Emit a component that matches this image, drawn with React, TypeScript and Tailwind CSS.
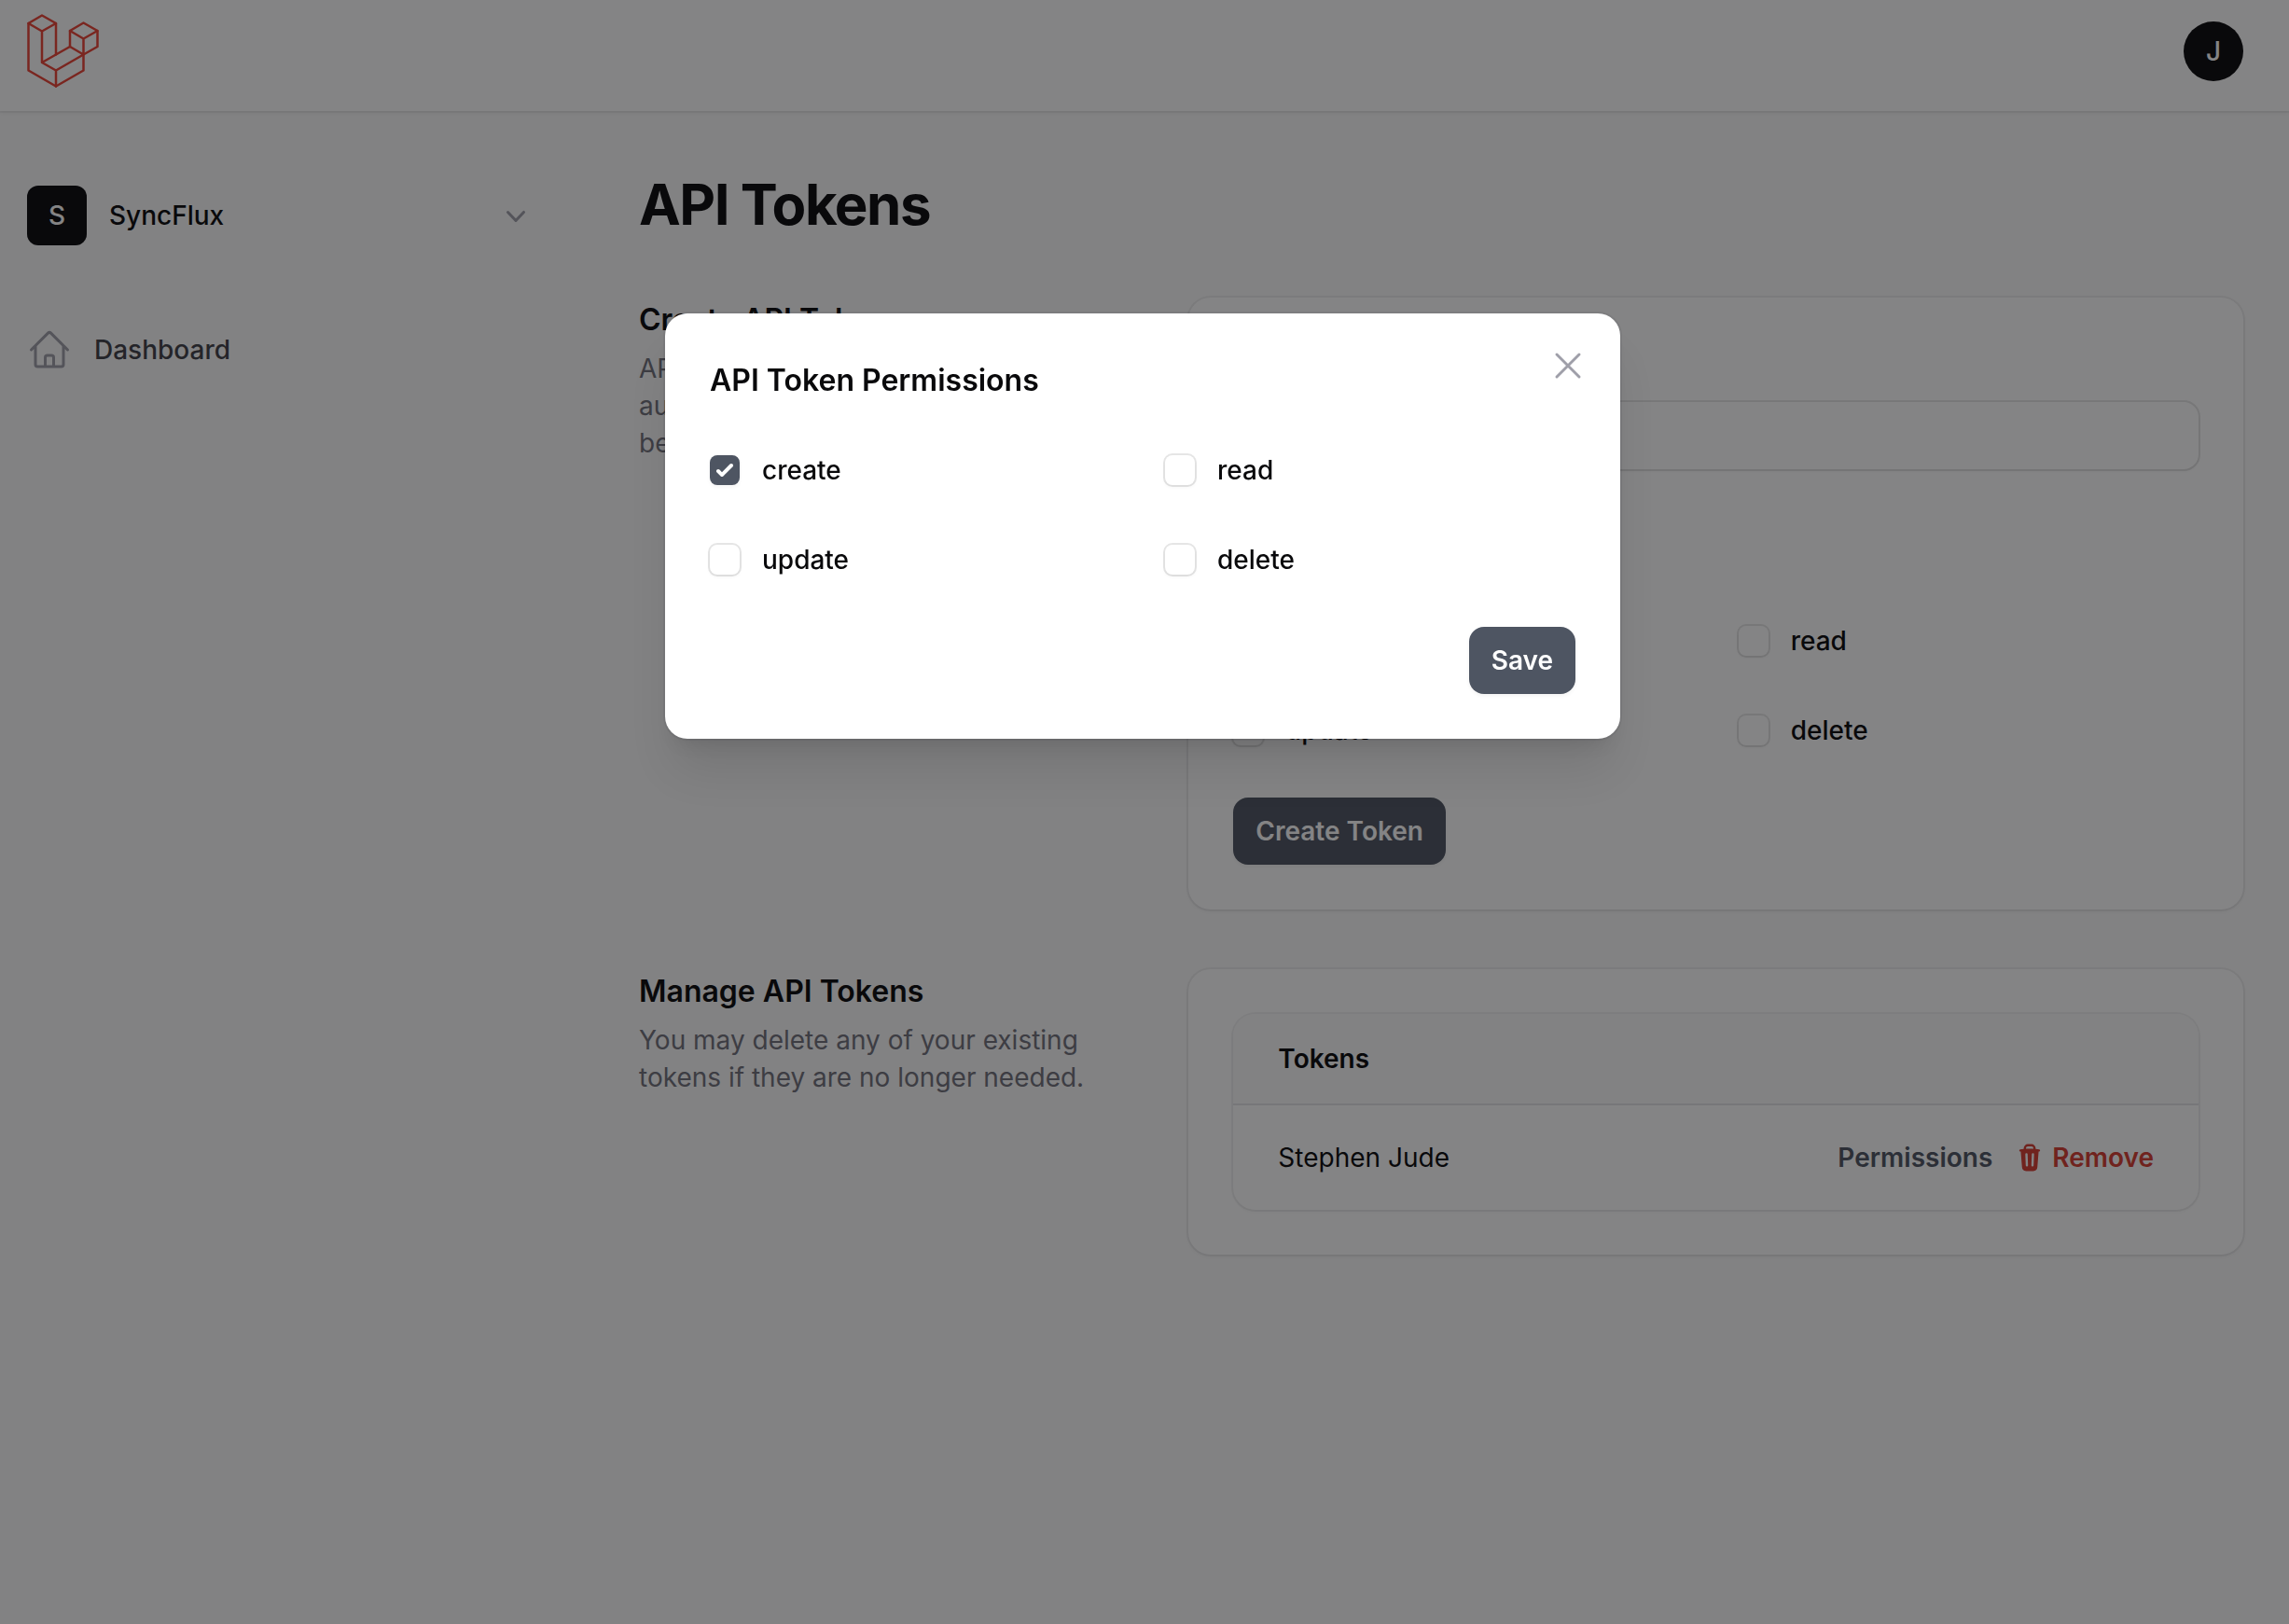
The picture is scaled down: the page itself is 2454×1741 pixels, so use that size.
import { useState } from "react";

const PERMISSIONS = ["create", "read", "update", "delete"];

function Logo() {
  return (
    <svg viewBox="0 0 79 80" className="h-20 w-[79px]" fill="none" stroke="#ea4335" strokeWidth="2.5" strokeLinejoin="round" strokeLinecap="round" aria-label="Laravel">
      <path d="M2.500 11 17 2.500 32 11V44.500L47 36V19L61.500 10.500 76.500 19V36L61.500 44.500V61.500L32 78.500 2.500 61.500Z" />
      <path d="M2.500 11 17 19.500 32 11M17 19.500V53L32 61.500V78.500M17 53 32 44.500M32 61.500 61.500 44.500 47 36M61.500 44.500V27.500M47 19 61.500 27.500 76.500 19" />
    </svg>
  );
}

function HomeIcon() {
  return (
    <svg viewBox="0 0 24 24" className="size-12 text-zinc-400" fill="none" stroke="currentColor" strokeWidth="1.5" strokeLinecap="round" strokeLinejoin="round" aria-hidden="true">
      <path d="m2.25 12 8.954-8.955a1.126 1.126 0 0 1 1.591 0L21.75 12M4.5 9.75v10.125c0 .621.504 1.125 1.125 1.125H9.75v-4.875c0-.621.504-1.125 1.125-1.125h2.25c.621 0 1.125.504 1.125 1.125V21h4.125c.621 0 1.125-.504 1.125-1.125V9.750M8.250 21h8.250" />
    </svg>
  );
}

function ChevronIcon() {
  return (
    <svg viewBox="0 0 20 20" className="size-10 text-zinc-400" fill="currentColor" aria-hidden="true">
      <path fillRule="evenodd" clipRule="evenodd" d="M5.230 7.710a.75.75 0 0 1 1.060.020L10 11.668l3.710-3.938a.75.75 0 1 1 1.080 1.040l-4.250 4.500a.75.75 0 0 1-1.080 0l-4.250-4.500a.75.75 0 0 1 .020-1.060Z" />
    </svg>
  );
}

function TrashIcon() {
  return (
    <svg viewBox="0 0 20 20" className="size-8" fill="currentColor" aria-hidden="true">
      <path fillRule="evenodd" clipRule="evenodd" d="M8.75 1A2.75 2.75 0 0 0 6 3.75v.443c-.795.077-1.584.176-2.365.298a.75.75 0 1 0 .230 1.482l.149-.022.841 10.518A2.75 2.75 0 0 0 7.596 19h4.807a2.75 2.75 0 0 0 2.742-2.530l.841-10.520.149.023a.75.75 0 0 0 .230-1.482A41.030 41.030 0 0 0 14 4.193V3.750A2.750 2.750 0 0 0 11.250 1h-2.500ZM10 4c.840 0 1.673.025 2.500.075V3.750c0-.690-.560-1.250-1.250-1.250h-2.500c-.690 0-1.250.560-1.250 1.250v.325C8.327 4.025 9.160 4 10 4ZM8.580 7.720a.75.75 0 0 0-1.500.060l.300 7.500a.75.75 0 1 0 1.500-.060l-.300-7.500Zm4.340.060a.75.75 0 1 0-1.500-.060l-.300 7.500a.75.75 0 1 0 1.500.060l.300-7.500Z" />
    </svg>
  );
}

function PermissionCheckbox({ label, initial = false }: { label: string; initial?: boolean }) {
  const [checked, setChecked] = useState(initial);
  return (
    <label className="flex h-12 items-center gap-6 text-[28px] leading-12 font-medium text-zinc-950">
      <span className="relative grid size-8">
        <input
          type="checkbox"
          checked={checked}
          onChange={(e) => setChecked(e.target.checked)}
          className="size-8 appearance-none rounded-lg bg-white shadow-[0_0_0_2px_rgba(9,9,11,0.1),0_2px_4px_rgba(0,0,0,0.05)] checked:bg-[#4e5562] checked:shadow-[0_2px_4px_rgba(0,0,0,0.05)]"
        />
        {checked && (
          <svg viewBox="0 0 16 16" className="pointer-events-none absolute inset-0 size-8" fill="white" aria-hidden="true">
            <path d="M12.207 4.793a1 1 0 0 1 0 1.414l-5 5a1 1 0 0 1-1.414 0l-2-2a1 1 0 0 1 1.414-1.414L6.500 9.086l4.293-4.293a1 1 0 0 1 1.414 0Z" />
          </svg>
        )}
      </span>
      {label}
    </label>
  );
}

function PermissionGrid({ selected = [] }: { selected?: string[] }) {
  return (
    <div className="grid grid-cols-2 gap-12">
      {PERMISSIONS.map((p) => (
        <PermissionCheckbox key={p} label={p} initial={selected.includes(p)} />
      ))}
    </div>
  );
}

const buttonClass =
  "h-18 rounded-2xl bg-[#4e5562] px-6 text-[28px] leading-10 font-semibold text-white shadow-[0_2px_4px_rgba(0,0,0,0.05)]";
const cardClass =
  "col-span-2 rounded-3xl bg-white p-12 shadow-[0_0_0_2px_rgba(9,9,11,0.05),0_2px_4px_rgba(0,0,0,0.05)]";

function SectionIntro({ title, text }: { title: string; text: string }) {
  return (
    <div className="flex flex-col gap-2">
      <h2 className="text-[32px] leading-12 font-semibold text-zinc-950">{title}</h2>
      <p className="text-[28px] leading-10 text-zinc-500">{text}</p>
    </div>
  );
}

export default function App() {
  return (
    <div className="min-h-screen bg-zinc-50 font-['Inter',sans-serif] text-zinc-950 antialiased">
      <header className="flex h-[119px] items-start justify-between bg-white pr-[49px] pl-7 shadow-[0_0_0_2px_rgba(9,9,11,0.05),0_2px_4px_rgba(0,0,0,0.05)]">
        <a href="#" className="pt-3.5">
          <Logo />
        </a>
        <button className="mt-[23px] size-16 rounded-full bg-zinc-950 text-[28px] font-medium text-white" aria-label="User menu">
          J
        </button>
      </header>

      <div className="flex">
        <aside className="flex w-[621px] shrink-0 flex-col gap-22 pt-20 pr-12 pl-[29px]">
          <button className="flex items-center gap-6 text-left text-[28px] font-medium">
            <span className="grid size-16 place-items-center rounded-xl bg-zinc-950 text-white">S</span>
            <span className="flex-1">SyncFlux</span>
            <ChevronIcon />
          </button>
          <nav>
            <a href="#" className="flex items-center gap-6 text-[28px] leading-12 font-medium text-zinc-700">
              <HomeIcon />
              Dashboard
            </a>
          </nav>
        </aside>

        <main className="flex flex-1 flex-col gap-16 py-16 pr-[49px] pl-16">
          <h1 className="text-[60px] leading-18 font-bold tracking-tight">API Tokens</h1>

          <section className="grid grid-cols-3 items-start gap-12">
            <SectionIntro
              title="Create API Token"
              text="API tokens allow third-party services to authenticate with our application on your behalf."
            />
            <form className={cardClass} onSubmit={(e) => e.preventDefault()}>
              <div className="flex flex-col gap-12">
                <label className="flex flex-col gap-4 text-[28px] leading-12 font-medium">
                  Token Name
                  <input
                    type="text"
                    className="h-18 rounded-2xl bg-white px-6 font-normal shadow-[0_0_0_2px_rgba(9,9,11,0.1),0_2px_4px_rgba(0,0,0,0.05)] outline-none"
                  />
                </label>
                <fieldset>
                  <legend className="mb-16 text-[28px] leading-12 font-medium">Permissions</legend>
                  <PermissionGrid />
                </fieldset>
                <button className={`${buttonClass} self-start`}>Create Token</button>
              </div>
            </form>
          </section>

          <section className="grid grid-cols-3 items-start gap-12">
            <SectionIntro
              title="Manage API Tokens"
              text="You may delete any of your existing tokens if they are no longer needed."
            />
            <div className={cardClass}>
              <div className="overflow-hidden rounded-3xl shadow-[0_0_0_2px_rgba(9,9,11,0.05),0_2px_4px_rgba(0,0,0,0.05)]">
                <table className="w-full border-separate border-spacing-0 text-[28px] leading-10">
                  <thead>
                    <tr>
                      <th
                        scope="col"
                        colSpan={2}
                        className="h-[98px] border-b-2 border-zinc-200 bg-zinc-50 px-12 text-left font-semibold"
                      >
                        Tokens
                      </th>
                    </tr>
                  </thead>
                  <tbody>
                    <tr className="h-28">
                      <td className="pl-12">Stephen Jude</td>
                      <td className="pr-12">
                        <div className="flex items-center justify-end gap-6 font-semibold">
                          <button className="text-[#4e5562]">Permissions</button>
                          <button className="flex items-center gap-2 text-[#d63c31]">
                            <TrashIcon />
                            Remove
                          </button>
                        </div>
                      </td>
                    </tr>
                  </tbody>
                </table>
              </div>
            </div>
          </section>
        </main>
      </div>

      <div className="fixed inset-0 flex items-start justify-center bg-zinc-950/50 pt-84 pr-1">
        <div
          role="dialog"
          aria-modal="true"
          aria-labelledby="permissions-title"
          className="relative flex w-full max-w-5xl flex-col gap-12 rounded-3xl bg-white p-12 shadow-[0_0_0_2px_rgba(9,9,11,0.05),0_40px_50px_-10px_rgba(0,0,0,0.1),0_16px_20px_-12px_rgba(0,0,0,0.1)]"
        >
          <h2 id="permissions-title" className="text-[32px] leading-12 font-semibold">
            API Token Permissions
          </h2>
          <button className="absolute top-8 right-8 text-zinc-400" aria-label="Close">
            <svg viewBox="0 0 24 24" className="size-12" fill="none" stroke="currentColor" strokeWidth="1.5" strokeLinecap="round">
              <path d="M6 18 18 6M6 6l12 12" />
            </svg>
          </button>
          <PermissionGrid selected={["create"]} />
          <button className={`${buttonClass} self-end`}>Save</button>
        </div>
      </div>
    </div>
  );
}
